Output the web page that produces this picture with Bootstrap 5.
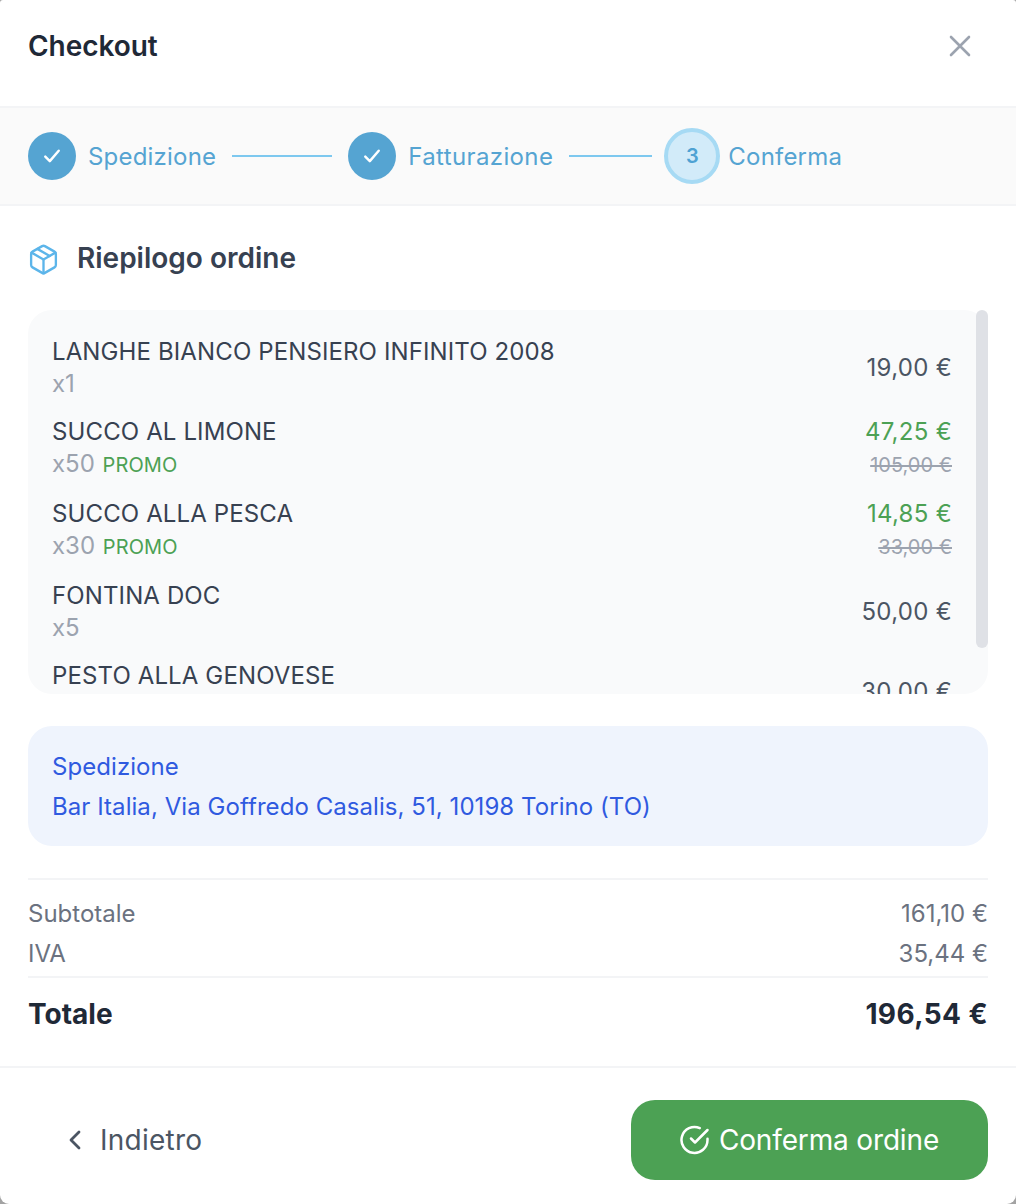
<!DOCTYPE html>
<html lang="it">
<head>
    <meta charset="UTF-8">
    <meta name="viewport" content="width=device-width, initial-scale=1.0">
    <title>Checkout</title>
    <link rel="stylesheet" href="https://cdn.jsdelivr.net/npm/bootstrap@5.3.0/dist/css/bootstrap.min.css">
    <style>
        html, body { height: 100%; }
        body {
            background-color: #a3a3a3;
            font-family: Inter, "Liberation Sans", sans-serif;
            color: #374151;
            overflow: hidden;
        }
        .sheet {
            width: 1016px;
            height: 1204px;
            background: #fff;
            border-radius: 3px 3px 9px 9px;
            overflow: hidden;
            display: flex;
            flex-direction: column;
        }
        .sheet-head {
            height: 108px;
            padding: 0 28px;
            border-bottom: 2px solid #f3f4f6;
        }
        .sheet-title {
            font-size: 28px;
            font-weight: 600;
            line-height: 1;
            letter-spacing: -.05px;
            color: #1f2937;
            margin: 0 0 14px;
        }
        .close-x {
            background: none;
            border: 0;
            padding: 0;
            width: 24px;
            height: 24px;
            margin: 0 16px 14px 0;
            color: #9ca3af;
            line-height: 0;
        }
        .steps {
            height: 98px;
            padding: 0 28px;
            background: #fafafa;
            border-bottom: 2px solid #f3f4f6;
        }
        .step-dot {
            width: 48px;
            height: 48px;
            background: #55a4d2;
            color: #fff;
        }
        .step-now {
            width: 56px;
            height: 56px;
            margin-left: 12px;
            background: #d2ebf9;
            border: 4px solid #a6daf4;
            color: #4ea2d3;
            font-size: 20px;
            font-weight: 600;
        }
        .step-name {
            font-size: 24px;
            color: #55a4d2;
            line-height: 1;
            letter-spacing: .2px;
            margin: 2px 16px 0 12px;
        }
        .step-name-wide { letter-spacing: .38px; }
        .step-name-last { margin-left: 8px; }
        .step-line {
            height: 2px;
            background: #7dc8ef;
        }
        .step-line-a { width: 100px; margin-right: 16px; }
        .step-line-b { width: 83px; }
        .summary-head {
            height: 104px;
            padding: 2px 28px 0 27px;
            gap: 17px;
        }
        .summary-head h2 {
            font-size: 28px;
            font-weight: 600;
            color: #374151;
            margin: 0;
        }
        .items-wrap {
            margin: 0 28px;
            position: relative;
        }
        .items-box {
            height: 384px;
            background: #f9fafb;
            border-radius: 24px;
            overflow: hidden;
            padding: 26px 36px 0 24px;
        }
        .items-scroll {
            position: absolute;
            top: 0;
            right: 0;
            width: 12px;
            height: 338px;
            background: #dfe1e6;
            border-radius: 6px;
        }
        .item-row { margin-bottom: 16px; }
        .item-name { font-size: 24px; line-height: 32px; color: #374151; letter-spacing: .12px; }
        .item-qty { font-size: 24px; line-height: 32px; height: 32px; color: #9ca3af; }
        .item-promo { font-size: 20px; color: #4ca154; margin-left: 1px; letter-spacing: .1px; }
        .item-price { font-size: 24px; line-height: 32px; color: #4b5563; letter-spacing: .3px; }
        .item-sale { color: #4ca154; }
        .item-old { font-size: 20px; line-height: 34px; color: #9ca3af; }
        .ship-box {
            margin: 32px 28px;
            height: 120px;
            background: #eff4fd;
            border-radius: 24px;
            padding: 21px 24px;
            color: #2f5ae0;
            font-size: 24px;
            line-height: 40px;
            letter-spacing: .06px;
        }
        .totals {
            margin: 0 28px;
            border-top: 2px solid #f3f4f6;
            padding-top: 14px;
        }
        .total-row { font-size: 24px; line-height: 40px; color: #6b7280; }
        .total-big {
            border-top: 2px solid #f3f4f6;
            margin-top: 2px;
            height: 74px;
            font-size: 28px;
            font-weight: 700;
            color: #1f2937;
        }
        .total-sum { letter-spacing: .4px; }
        .sheet-foot {
            margin-top: auto;
            height: 138px;
            padding: 32px 28px 0;
            border-top: 2px solid #f3f4f6;
        }
        .back-link {
            height: 80px;
            background: none;
            border: 0;
            color: #4b5563;
            font-size: 28px;
            letter-spacing: .25px;
            padding: 0 0 0 39px;
            gap: 17px;
        }
        .confirm-btn {
            width: 357px;
            height: 80px;
            background: #4ca154;
            border: 0;
            border-radius: 24px;
            color: #fff;
            font-size: 28px;
            letter-spacing: -.15px;
            gap: 9px;
        }
    </style>
</head>
<body>
    <div class="sheet">
        <div class="sheet-head d-flex justify-content-between align-items-center">
            <h1 class="sheet-title">Checkout</h1>
            <button class="close-x" type="button" aria-label="Chiudi">
                <svg width="24" height="24" viewBox="0 0 24 24" fill="none" stroke="currentColor" stroke-width="2.6" stroke-linecap="round"><path d="M3 3l18 18M21 3L3 21"/></svg>
            </button>
        </div>

        <div class="steps d-flex align-items-center">
            <span class="step-dot rounded-circle d-flex align-items-center justify-content-center">
                <svg width="22" height="22" viewBox="0 0 18 18" fill="none" stroke="currentColor" stroke-width="2" stroke-linecap="round" stroke-linejoin="round"><path d="M3.500 9.500l3.700 3.700 7.300-8.500"/></svg>
            </span>
            <span class="step-name">Spedizione</span>
            <span class="step-line step-line-a"></span>
            <span class="step-dot rounded-circle d-flex align-items-center justify-content-center">
                <svg width="22" height="22" viewBox="0 0 18 18" fill="none" stroke="currentColor" stroke-width="2" stroke-linecap="round" stroke-linejoin="round"><path d="M3.500 9.500l3.700 3.700 7.300-8.500"/></svg>
            </span>
            <span class="step-name step-name-wide">Fatturazione</span>
            <span class="step-line step-line-b"></span>
            <span class="step-now rounded-circle d-flex align-items-center justify-content-center">3</span>
            <span class="step-name step-name-last">Conferma</span>
        </div>

        <div class="summary-head d-flex align-items-center">
            <svg width="33" height="33" viewBox="0 0 24 24" fill="none" stroke="#5cb5ea" stroke-width="1.700" stroke-linecap="round" stroke-linejoin="round"><path d="M11 21.730a2 2 0 0 0 2 0l7-4A2 2 0 0 0 21 16V8a2 2 0 0 0-1-1.730l-7-4a2 2 0 0 0-2 0l-7 4A2 2 0 0 0 3 8v8a2 2 0 0 0 1 1.730z"/><path d="M12 22V12"/><path d="M3.300 7l8.700 5 8.700-5"/><path d="M7.500 4.270l9 5.150"/></svg>
            <h2>Riepilogo ordine</h2>
        </div>

        <div class="items-wrap">
            <div class="items-box">
                <div class="item-row d-flex justify-content-between align-items-center">
                    <div class="align-self-start"><div class="item-name">LANGHE BIANCO PENSIERO INFINITO 2008</div><div class="item-qty">x1</div></div>
                    <div class="text-end"><div class="item-price">19,00 €</div></div>
                </div>
                <div class="item-row d-flex justify-content-between align-items-center">
                    <div class="align-self-start"><div class="item-name">SUCCO AL LIMONE</div><div class="item-qty">x50 <span class="item-promo">PROMO</span></div></div>
                    <div class="text-end"><div class="item-price item-sale">47,25 €</div><div class="item-old text-decoration-line-through">105,00 €</div></div>
                </div>
                <div class="item-row d-flex justify-content-between align-items-center">
                    <div class="align-self-start"><div class="item-name">SUCCO ALLA PESCA</div><div class="item-qty">x30 <span class="item-promo">PROMO</span></div></div>
                    <div class="text-end"><div class="item-price item-sale">14,85 €</div><div class="item-old text-decoration-line-through">33,00 €</div></div>
                </div>
                <div class="item-row d-flex justify-content-between align-items-center">
                    <div class="align-self-start"><div class="item-name">FONTINA DOC</div><div class="item-qty">x5</div></div>
                    <div class="text-end"><div class="item-price">50,00 €</div></div>
                </div>
                <div class="item-row d-flex justify-content-between align-items-center">
                    <div class="align-self-start"><div class="item-name">PESTO ALLA GENOVESE</div><div class="item-qty"></div></div>
                    <div class="text-end"><div class="item-price">30,00 €</div></div>
                </div>
            </div>
            <div class="items-scroll"></div>
        </div>

        <div class="ship-box">
            <div>Spedizione</div>
            <div>Bar Italia, Via Goffredo Casalis, 51, 10198 Torino (TO)</div>
        </div>

        <div class="totals">
            <div class="total-row d-flex justify-content-between"><span>Subtotale</span><span>161,10 €</span></div>
            <div class="total-row d-flex justify-content-between"><span>IVA</span><span>35,44 €</span></div>
            <div class="total-big d-flex justify-content-between align-items-center"><span>Totale</span><span class="total-sum">196,54 €</span></div>
        </div>

        <div class="sheet-foot d-flex justify-content-between align-items-start">
            <button class="back-link d-flex align-items-center" type="button">
                <svg width="16" height="20" viewBox="0 0 16 20" fill="none" stroke="currentColor" stroke-width="2.800" stroke-linecap="round" stroke-linejoin="round"><path d="M12 2l-8 8 8 8"/></svg>
                Indietro
            </button>
            <button class="confirm-btn d-flex align-items-center justify-content-center" type="button">
                <svg width="30" height="30" viewBox="0 0 30 30" fill="none" stroke="currentColor" stroke-width="2.500" stroke-linecap="round" stroke-linejoin="round"><path d="M27.500 13.800v1.200a13 13 0 1 1-7.700-11.900"/><path d="M27.500 5L15 17.500l-4-4"/></svg>
                Conferma ordine
            </button>
        </div>
    </div>
    <script src="https://cdn.jsdelivr.net/npm/bootstrap@5.3.0/dist/js/bootstrap.bundle.min.js"></script>
</body>
</html>
